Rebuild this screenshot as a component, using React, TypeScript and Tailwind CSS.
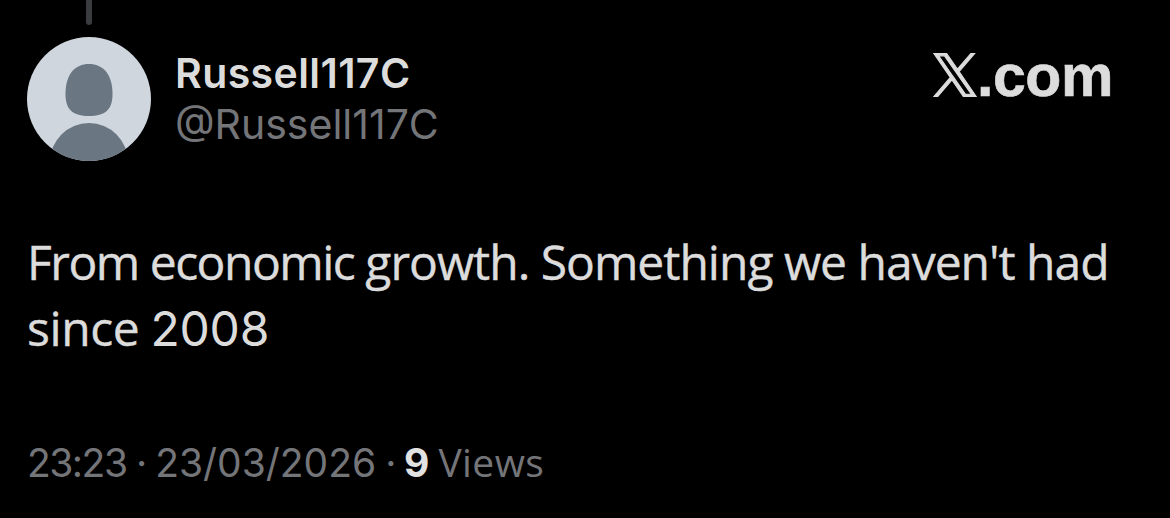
function Avatar() {
  return (
    <svg viewBox="0 0 124 124" className="w-[124px] h-[124px] rounded-full">
      <rect width="124" height="124" fill="#cfd6de" />
      <path
        d="M62 27C76 27 85.5 37 85.5 57C85.5 73 78 79 62 79C46 79 38.5 73 38.5 57C38.5 37 48 27 62 27Z"
        fill="#6a7783"
      />
      <circle cx="62" cy="125" r="39" fill="#6a7783" />
    </svg>
  );
}

function Brand() {
  return (
    <div className="flex items-start pt-4 mr-[-1px] text-[#dcdcdc]">
      <svg
        viewBox="0 0 1200 1227"
        fill="currentColor"
        stroke="currentColor"
        strokeWidth="32"
        className="w-11 h-11"
      >
        <path d="M714.163 519.284L1160.89 0H1055.03L667.137 450.887L357.328 0H0L468.492 681.821L0 1226.37H105.866L515.491 750.218L842.672 1226.37H1200L714.137 519.284ZM569.165 687.828L521.697 619.934L144.011 79.6944H306.615L611.412 515.685L658.88 583.579L1055.08 1150.3H892.476L569.165 687.828Z" />
      </svg>
      <span className="font-['Liberation_Sans',sans-serif] font-bold text-[59px] leading-[47px] tracking-[-0.4px] [-webkit-text-stroke:0.6px_#dcdcdc]">
        .com
      </span>
    </div>
  );
}

function App() {
  return (
    <main className="w-[1170px] h-[518px] bg-black overflow-hidden pl-[27px] pr-[58px] font-['Open_Sans',sans-serif]">
      {/* thread line coming from the post above */}
      <div className="w-[124px] h-[25px] flex justify-center">
        <div className="w-1.5 h-full rounded-b-full bg-[#3b3c40]" />
      </div>
      <header className="flex justify-between pt-3">
        <div className="flex gap-6">
          <Avatar />
          <div className="pt-[11px] font-['Inter',sans-serif] text-[41px] leading-[51px] whitespace-nowrap">
            <p className="font-semibold text-[#dcdcdc] tracking-[0.4px]">
              Russell117C
            </p>
            <p className="text-[#747579]">@Russell117C</p>
          </div>
        </div>
        <Brand />
      </header>
      <p className="mt-[68px] text-[48px] leading-[66px] text-[#dcdcdc] whitespace-nowrap [-webkit-text-stroke:0.4px_#dcdcdc]">
        <span className="tracking-[-1.5px]">From economic </span>
        <span className="tracking-[-1px]">growth. Something we haven't had</span>
        <br />
        <span className="tracking-[-0.4px]">since </span>
        <span className="font-['Inter',sans-serif] tracking-[-0.2px] ml-[-1px] [-webkit-text-stroke:0]">
          2008
        </span>
      </p>
      <p className="mt-[70px] text-[39px] leading-[60px] text-[#747579] whitespace-nowrap">
        <span className="font-['Inter',sans-serif]">
          <span className="tracking-[-1.5px]">23:23 · </span>
          <span className="tracking-[0px]">23/03/2026</span>
          <span className="tracking-[-1.8px]"> · </span>
          <b className="font-bold text-[#e2e2e2] tracking-[-1px]">9</b>
        </span>{" "}
        <span className="tracking-[0.4px]">Views</span>
      </p>
    </main>
  );
}

export default App;
